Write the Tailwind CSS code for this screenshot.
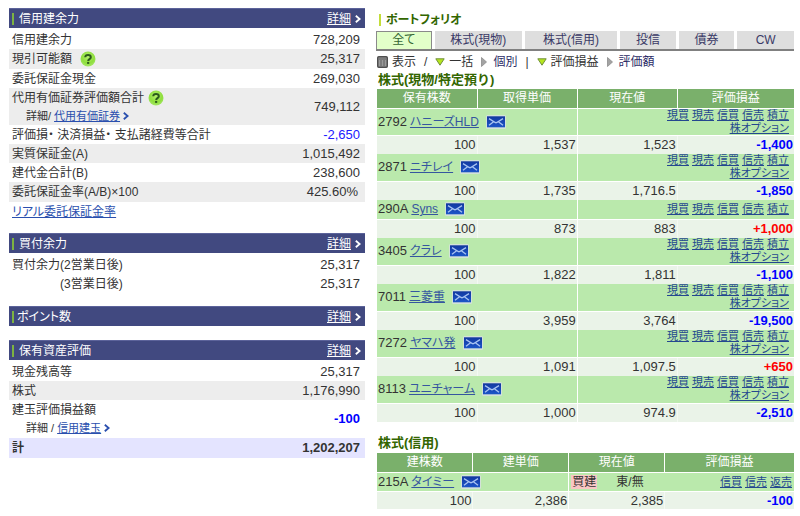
<!DOCTYPE html>
<html lang="ja">
<head>
<meta charset="utf-8">
<meta name="viewport" content="width=device-width, initial-scale=1">
<title>口座サマリー</title>
<script src="https://cdn.jsdelivr.net/npm/@tailwindcss/browser@4"></script>
</head>
<body class="bg-white text-[#333] font-['Liberation_Sans','Noto_Sans_CJK_JP',sans-serif] text-xs leading-[18px] [font-feature-settings:'palt']">

<svg class="absolute size-0" aria-hidden="true">
  <defs>
    <radialGradient id="lime" cx="50%" cy="35%" r="65%">
      <stop offset="0" stop-color="#b4f06c"/><stop offset=".65" stop-color="#8ede3c"/><stop offset="1" stop-color="#a5e666"/>
    </radialGradient>
    <linearGradient id="mailfill" x1="0" y1="0" x2="0" y2="1">
      <stop offset="0" stop-color="#1238a0"/><stop offset="1" stop-color="#1c55c8"/>
    </linearGradient>
    <symbol id="help" viewBox="0 0 16 16">
      <circle cx="8" cy="8" r="7.5" fill="url(#lime)"/>
      <path d="M5.2 6.3C5.3 4.7 6.4 3.9 8 3.9s2.8.9 2.8 2.3c0 1.9-2.6 1.9-2.6 3.7" fill="none" stroke="#2c5a1c" stroke-width="2"/>
      <rect x="7.1" y="10.9" width="2.1" height="2" fill="#2c5a1c"/>
    </symbol>
    <symbol id="mail" viewBox="0 0 20 14">
      <rect x="0" y="0" width="20" height="14" rx="1.5" fill="#d3e2d8"/>
      <rect x="1" y="1.3" width="18" height="11" fill="url(#mailfill)"/>
      <path d="M3 3.6 L8 6.8 Q10 8.6 12 6.8 L17 3.6 M3 10.2 L7.6 6.8 M17 10.2 L12.4 6.8" fill="none" stroke="#a9c4f2" stroke-width="1.3"/>
    </symbol>
    <symbol id="chev" viewBox="0 0 6 8">
      <path d="M.8 .8 L4.6 4 L.8 7.2" fill="none" stroke="currentColor" stroke-width="1.8"/>
    </symbol>
    <symbol id="down" viewBox="0 0 10 8">
      <path d="M.8 .8 H9.2 L5 7.2 Z" fill="#b6e61e" stroke="#6f8f3a" stroke-width="1"/>
    </symbol>
    <symbol id="right" viewBox="0 0 6 10">
      <path d="M.5 .5 L5.5 5 L.5 9.5 Z" fill="#a3a3a3" stroke="#8c8c8c" stroke-width=".8"/>
    </symbol>
  </defs>
</svg>

<main class="grid grid-cols-[356fr_418fr] gap-[11px] pl-[9px] pr-1.5 pt-2">

  <div class="flex flex-col">
    <section>
      <header class="flex h-5 items-center justify-between border-t border-[#5c639a] bg-[#414980] pl-[3px] pr-1 text-white">
        <h2 class="flex items-center gap-[5px]"><span class="h-3 w-[2px] bg-[#7db341]"></span>信用建余力</h2>
        <a href="#" class="flex items-center gap-1"><span class="underline">詳細</span><svg class="h-2 w-1.5"><use href="#chev"/></svg></a>
      </header>
      <table class="mt-0.5 w-full">
        <tbody>
          <tr class="h-[19px]"><th scope="row" class="pl-[3px] text-left font-normal">信用建余力</th><td class="pr-[5px] text-right text-[13px]">728,209</td></tr>
          <tr class="h-5 bg-[#ededed]"><th scope="row" class="pl-[3px] text-left font-normal"><span class="flex items-center gap-2">現引可能額<svg class="size-4"><use href="#help"/></svg></span></th><td class="pr-[5px] text-right text-[13px]">25,317</td></tr>
          <tr class="h-[19px]"><th scope="row" class="pl-[3px] text-left font-normal">委託保証金現金</th><td class="pr-[5px] text-right text-[13px]">269,030</td></tr>
          <tr class="h-[37px] bg-[#ededed]"><th scope="row" class="pl-[3px] text-left font-normal">
            <span class="flex items-center gap-1">代用有価証券評価額合計<svg class="size-4"><use href="#help"/></svg></span>
            <span class="flex items-center gap-[3px] pl-3.5 text-[11px]">詳細/<a href="#" class="flex items-center gap-[3px] text-[#2a4fae]"><span class="underline">代用有価証券</span><svg class="h-2 w-1.5"><use href="#chev"/></svg></a></span>
          </th><td class="pr-[5px] text-right text-[13px]">749,112</td></tr>
          <tr class="h-[19px]"><th scope="row" class="pl-[3px] text-left font-normal">評価損・ 決済損益・ 支払諸経費等合計</th><td class="pr-[5px] text-right text-[13px] text-[#2020ff]">-2,650</td></tr>
          <tr class="h-[19px] bg-[#ededed]"><th scope="row" class="pl-[3px] text-left font-normal">実質保証金(A)</th><td class="pr-[5px] text-right text-[13px]">1,015,492</td></tr>
          <tr class="h-[19px]"><th scope="row" class="pl-[3px] text-left font-normal">建代金合計(B)</th><td class="pr-[5px] text-right text-[13px]">238,600</td></tr>
          <tr class="h-5 bg-[#ededed]"><th scope="row" class="pl-[3px] text-left font-normal">委託保証金率(A/B)×100</th><td class="pr-[7px] text-right text-[13px]">425.60%</td></tr>
          <tr class="h-[19px]"><th scope="row" colspan="2" class="pl-[3px] text-left font-normal"><a href="#" class="text-[#2a4fae] underline">リアル委託保証金率</a></th></tr>
        </tbody>
      </table>
    </section>

    <section class="mt-3">
      <header class="flex h-5 items-center justify-between border-t border-[#5c639a] bg-[#414980] pl-[3px] pr-1 text-white">
        <h2 class="flex items-center gap-[5px]"><span class="h-3 w-[2px] bg-[#7db341]"></span>買付余力</h2>
        <a href="#" class="flex items-center gap-1"><span class="underline">詳細</span><svg class="h-2 w-1.5"><use href="#chev"/></svg></a>
      </header>
      <table class="mt-0.5 w-full">
        <tbody>
          <tr class="h-[19px]"><th scope="row" class="pl-[3px] text-left font-normal">買付余力(2営業日後)</th><td class="pr-[5px] text-right text-[13px]">25,317</td></tr>
          <tr class="h-[19px]"><th scope="row" class="pl-[51px] text-left font-normal">(3営業日後)</th><td class="pr-[5px] text-right text-[13px]">25,317</td></tr>
        </tbody>
      </table>
    </section>

    <section class="mt-[13px]">
      <header class="flex h-5 items-center justify-between border-t border-[#5c639a] bg-[#414980] pl-[3px] pr-1 text-white">
        <h2 class="flex items-center gap-[3px]"><span class="h-3 w-[2px] bg-[#7db341]"></span>ポイント数</h2>
        <a href="#" class="flex items-center gap-1"><span class="underline">詳細</span><svg class="h-2 w-1.5"><use href="#chev"/></svg></a>
      </header>
    </section>

    <section class="mt-3.5">
      <header class="flex h-5 items-center justify-between border-t border-[#5c639a] bg-[#414980] pl-[3px] pr-1 text-white">
        <h2 class="flex items-center gap-[5px]"><span class="h-3 w-[2px] bg-[#7db341]"></span>保有資産評価</h2>
        <a href="#" class="flex items-center gap-1"><span class="underline">詳細</span><svg class="h-2 w-1.5"><use href="#chev"/></svg></a>
      </header>
      <table class="mt-0.5 w-full">
        <tbody>
          <tr class="h-[19px]"><th scope="row" class="pl-[3px] text-left font-normal">現金残高等</th><td class="pr-[5px] text-right text-[13px]">25,317</td></tr>
          <tr class="h-[19px] bg-[#ededed]"><th scope="row" class="pl-[3px] text-left font-normal">株式</th><td class="pr-[5px] text-right text-[13px]">1,176,990</td></tr>
          <tr class="h-[38px]"><th scope="row" class="pl-[3px] text-left font-normal">建玉評価損益額
            <span class="flex items-center gap-[3px] pl-3.5 text-[11px]">詳細 /<a href="#" class="flex items-center gap-[3px] text-[#2a4fae]"><span class="underline">信用建玉</span><svg class="h-2 w-1.5"><use href="#chev"/></svg></a></span>
          </th><td class="pr-[5px] text-right text-[13px] font-bold text-[#0000ff]">-100</td></tr>
          <tr class="h-5 bg-[#e4e4ff] font-bold"><th scope="row" class="pl-[3px] text-left">計</th><td class="pr-[5px] text-right text-[13px]">1,202,207</td></tr>
        </tbody>
      </table>
    </section>
  </div>

  <div class="flex flex-col">
    <h1 class="flex h-[23px] items-center gap-[5px] pl-[3px] font-bold text-[#336600]"><span class="h-3 w-[2px] bg-[#c3dd3a]"></span>ポートフォリオ</h1>

    <nav class="grid grid-cols-[56fr_88fr_93fr_56fr_56fr_57fr] gap-[3px] border-b-2 border-[#808080] leading-[17px] text-[#3a3a66]">
      <button class="border border-b-0 border-[#8a8a8a] bg-[#e2ffc9] text-[#336633]">全て</button>
      <button class="bg-[#dedede]">株式(現物)</button>
      <button class="bg-[#dedede]">株式(信用)</button>
      <button class="bg-[#dedede]">投信</button>
      <button class="bg-[#dedede]">債券</button>
      <button class="bg-[#dedede]">CW</button>
    </nav>

    <div class="mt-px flex h-[19px] items-center gap-2 whitespace-nowrap">
      <span class="flex items-center gap-1"><svg class="ml-px h-3 w-[11px]" viewBox="0 0 11 12"><rect x=".75" y=".75" width="9.5" height="10.5" rx="1" fill="#9b9b9b" stroke="#4f4f4f" stroke-width="1.5"/><path d="M2 3h7M4 4v6M7 4v6" stroke="#5e5e5e"/></svg>表示</span>
      <span>/</span>
      <button class="flex items-center gap-1"><svg class="h-2 w-2.5"><use href="#down"/></svg>一括</button>
      <button class="flex items-center gap-1.5 text-[#2b2b66]"><svg class="h-2.5 w-1.5"><use href="#right"/></svg>個別</button>
      <span>|</span>
      <button class="flex items-center gap-1"><svg class="h-2 w-2.5"><use href="#down"/></svg>評価損益</button>
      <button class="flex items-center gap-1.5 text-[#2b2b66]"><svg class="h-2.5 w-1.5"><use href="#right"/></svg>評価額</button>
    </div>

    <h2 class="pl-0.5 text-[13px] leading-[18px] font-bold text-[#336600] [font-feature-settings:normal]">株式(現物/特定預り)</h2>
    <table class="ml-px table-fixed">
      <colgroup><col class="w-[24%]"><col class="w-[24%]"><col class="w-[24%]"><col class="w-[28%]"></colgroup>
      <thead class="bg-[#7ab06b] text-white">
        <tr class="h-[19px] *:border-b *:border-white *:font-normal">
          <th scope="col" class="border-r">保有株数</th><th scope="col" class="border-r">取得単価</th><th scope="col" class="border-r">現在値</th><th scope="col">評価損益</th>
        </tr>
      </thead>
      <tbody id="holdings"></tbody>
    </table>

    <h2 class="mt-3 h-[19px] pl-0.5 text-[13px] leading-[18px] font-bold text-[#336600] [font-feature-settings:normal]">株式(信用)</h2>
    <table class="ml-px table-fixed">
      <colgroup><col class="w-[23%]"><col class="w-[23%]"><col class="w-[23%]"><col class="w-[31%]"></colgroup>
      <thead class="bg-[#7ab06b] text-white">
        <tr class="h-[19px] *:border-b *:border-white *:font-normal">
          <th scope="col" class="border-r">建株数</th><th scope="col" class="border-r">建単価</th><th scope="col" class="border-r">現在値</th><th scope="col">評価損益</th>
        </tr>
      </thead>
      <tbody>
        <tr class="h-[19px] bg-[#bae9ac] *:border-b *:border-white">
          <td colspan="2" class="border-r pl-px">
            <div class="flex items-center"><span class="text-[13px]">215A</span><a href="#" class="ml-[3px] text-[#35569f] underline">タイミー</a><button aria-label="アラートメール" class="ml-[7px]"><svg class="h-3.5 w-5"><use href="#mail"/></svg></button></div>
          </td>
          <td colspan="2" class="pl-0.5 pr-0.5">
            <div class="flex items-center"><span class="bg-[#f9c6c4] px-px leading-[14px]">買建</span><span class="ml-[19px]">東/無</span><span class="ml-auto flex gap-[3px] text-[11px] text-[#24478f] underline"><a href="#">信買</a><a href="#">信売</a><a href="#">返売</a></span></div>
          </td>
        </tr>
        <tr class="h-[17px] bg-[#eaf3e8] text-[13px] leading-[17px]">
          <td class="border-r border-[#f4f9f3] pr-px text-right">100</td><td class="border-r border-white pr-px text-right">2,386</td><td class="border-r border-[#f4f9f3] pr-px text-right">2,385</td><td class="pr-px text-right font-bold text-[#0000ff]">-100</td>
        </tr>
      </tbody>
    </table>
  </div>
</main>

<script>
  const stocks = [
    ['2792', 'ハニーズHLD', '1,537', '1,523', '-1,400', true],
    ['2871', 'ニチレイ', '1,735', '1,716.5', '-1,850', true],
    ['290A', 'Syns', '873', '883', '+1,000', false],
    ['3405', 'クラレ', '1,822', '1,811', '-1,100', true],
    ['7011', '三菱重', '3,959', '3,764', '-19,500', true],
    ['7272', 'ヤマハ発', '1,091', '1,097.5', '+650', true],
    ['8113', 'ユニチャーム', '1,000', '974.9', '-2,510', true],
  ];
  const orders = ['現買', '現売', '信買', '信売', '積立'].map(t => `<a href="#">${t}</a>`).join('');
  document.getElementById('holdings').innerHTML = stocks.map(([code, name, cost, price, gain, option]) => `
    <tr class="${option ? 'h-[27px]' : 'h-[19px]'} bg-[#bae9ac] *:border-b *:border-white">
      <td colspan="2" class="border-r pl-px">
        <div class="flex items-center"><span class="text-[13px]">${code}</span><a href="#" class="ml-[3px] text-[#35569f] underline">${name}</a><button aria-label="アラートメール" class="ml-[7px]"><svg class="h-3.5 w-5"><use href="#mail"/></svg></button></div>
      </td>
      <td colspan="2" class="pr-[5px] text-[11px] leading-[13px] text-[#24478f] underline">
        <div class="flex justify-end gap-[3px]">${orders}</div>
        ${option ? '<div class="text-right"><a href="#">株オプション</a></div>' : ''}
      </td>
    </tr>
    <tr class="h-[19px] bg-[#eaf3e8] text-[13px]">
      <td class="border-r border-[#f4f9f3] pr-px text-right">100</td>
      <td class="border-r border-white pr-px text-right">${cost}</td>
      <td class="border-r border-[#f4f9f3] pr-px text-right">${price}</td>
      <td class="pr-px text-right font-bold ${gain[0] === '+' ? 'text-[#ff0000]' : 'text-[#0000ff]'}">${gain}</td>
    </tr>`).join('');
</script>
</body>
</html>
